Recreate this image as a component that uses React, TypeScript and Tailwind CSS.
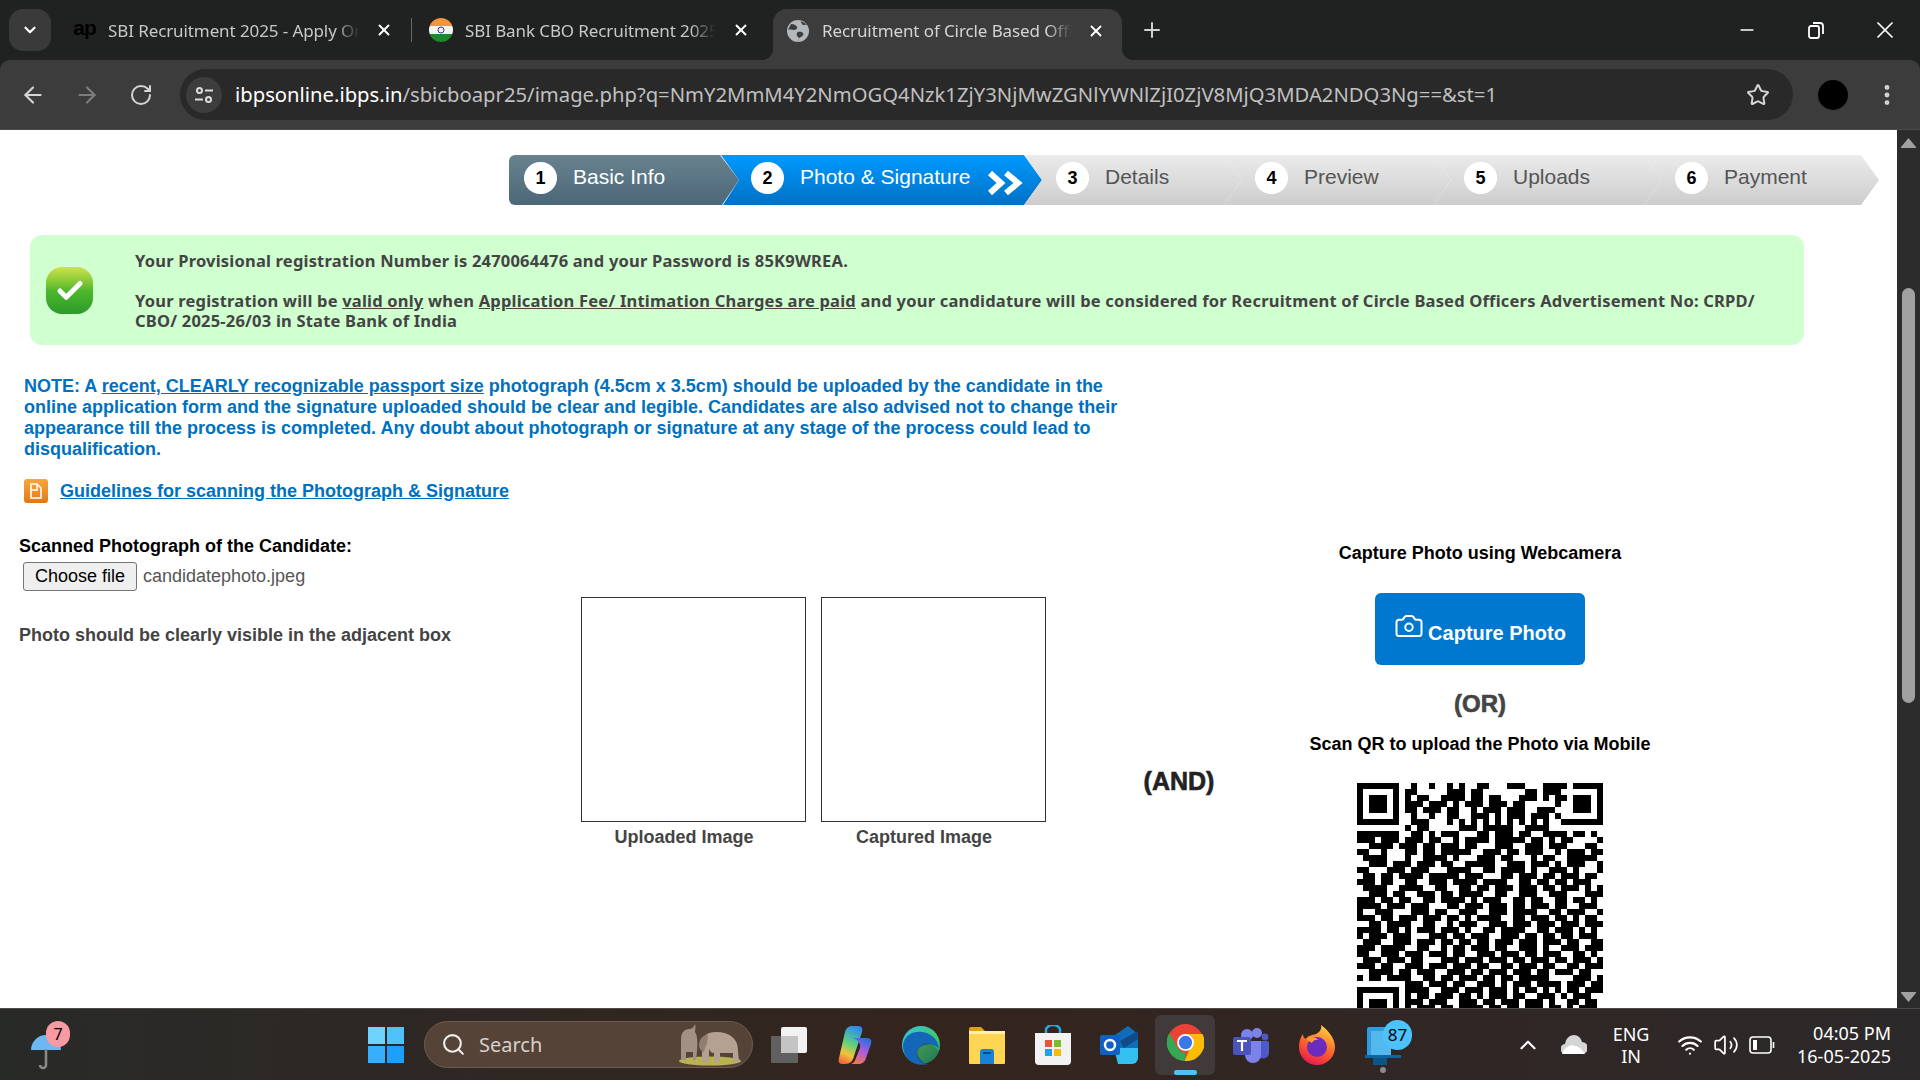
import { ArrowLeft, ArrowRight, Camera, ChevronDown, ChevronUp, Minus, Plus, RotateCw, Search, Star, X, Check, EllipsisVertical, Wifi, Volume2 } from 'lucide-react';

const QR_ROWS = [
  '.........#..#..#.#..##...###...###.#.....',
  '........##.....###.##.......##.####......',
  '........#.##..####.##.##...###.#.#.......',
  '........###.###.#.###.###.##.....##......',
  '........##.###.##..#.###.###..###.#......',
  '.........#..#..##..###.#.###.###.##......',
  '.........###...#.#.#.#.#.#.#.#.#.........',
  '........#.##.....###.#####..####.........',
  '#######..##.#.###...##.###.##..####.##.#.',
  '###.###.###.##..#.####.#####.##.#.##....#',
  '..####.###.##.###.##...###..###.###...##.',
  '##..#...##.##.#####..###.##.###..#.###.##',
  '.####...#..####.#...###.##...#.##..#####.',
  '..###.###.###.##..#####..###.###.#.###..#',
  '##...###.###...####..##.####.#..###.#...#',
  '.##.##.####.#####.###...##.###.##.###.##.',
  '###.##..##..###.####.####..##.##.##.###..',
  '.####..####..##..##.##.###.###.##.###.#.#',
  '..###.##..###.##.####..##..###..###...###',
  '###.##.##..##.####.#.###..##.##..##.##.#.',
  '####.###.###...##.###.###.##.###.##..###.',
  '#..###...###.##..###..###.####..##.###..#',
  '###.##.###.###.##.#.####..##.###.##.#.##.',
  '..##.####..##..#.###..###.###.###.###.###',
  '####.##.#.###.###.#..##.####..##.###.#.#.',
  '#.###.###...###.##.###..###.##.##.##.###.',
  '.###..###.###.##.##.##.###.###.###.##..##',
  '###.####..##..#.##.###.##..###.#..###.###',
  '##..###.###.###.##..###.###.##.###..##.#.',
  '.###.###.##...###.###.###.##.###.##.###.#',
  '###.##..###.###.###.##..##.###.##..##.###',
  '..####.##.###..###.##.###.###.##.###.##..',
  '#.##.####..##.##.###.##.##.#####....###.#',
  '........###.###.##..###.#.###.####.###.##',
  '........####..###.###.###.#.##.#.#.##.###',
  '........#.##.###.##.#.###.##..###.#.###..',
  '........###.###..###.##.###.###.#..##.##.',
  '........#.###.##.####.##.##.###.##.#.###.',
  '........###..###.##.##.###..#.###.##.##.#',
  '........#.##.#.###.###.##.###..##.#.###.#',
  '........##.###.##.#.###.#.##.###.##.#.##.',
];

function qrPath() {
  let d = '';
  QR_ROWS.forEach((row, y) => {
    [...row].forEach((c, x) => {
      if (c === '#') d += `M${x} ${y}h1v1h-1z`;
    });
  });
  const finder = (x: number, y: number) =>
    `M${x} ${y}h7v7h-7zM${x + 1} ${y + 1}v5h5v-5zM${x + 2} ${y + 2}h3v3h-3z`;
  return d + finder(0, 0) + finder(34, 0) + finder(0, 34);
}

const STEPS = [
  { n: 1, label: 'Basic Info', w: 'w-[230px]', pl: 'pl-[15px]', shape: 'first' },
  { n: 2, label: 'Photo & Signature', w: 'w-[321px]', pl: 'pl-[30px]', shape: 'active' },
  { n: 3, label: 'Details', w: 'w-[218px]', pl: 'pl-[32px]', shape: '' },
  { n: 4, label: 'Preview', w: 'w-[227px]', pl: 'pl-[31px]', shape: '' },
  { n: 5, label: 'Uploads', w: 'w-[229px]', pl: 'pl-[31px]', shape: '' },
  { n: 6, label: 'Payment', w: 'w-[235px]', pl: 'pl-[31px]', shape: '' },
];

function Stepper() {
  return (
    <div className="flex ml-[509px] h-[50px] font-['Liberation_Sans',sans-serif]">
      {STEPS.map(s => (
        <div
          key={s.n}
          className={`${s.w} ${s.pl} shrink-0 h-full flex items-center pb-[4px] ${s.n > 1 ? '-ml-[18px]' : 'rounded-l-md'} ${
            s.shape === 'first'
              ? 'bg-gradient-to-b from-[#68828f] to-[#4c6777] text-white [clip-path:polygon(0_0,211px_0,100%_50%,213px_100%,0_100%)]'
              : s.shape === 'active'
                ? 'bg-gradient-to-b from-[#0099ff] to-[#0071c5] text-white [clip-path:polygon(0_0,calc(100%-18px)_0,100%_50%,calc(100%-18px)_100%,2px_100%,18px_50%)]'
                : 'bg-gradient-to-b from-[#ebebeb] to-[#cdcdcd] text-[#555] [clip-path:polygon(0_0,calc(100%-18px)_0,100%_50%,calc(100%-18px)_100%,0_100%,18px_50%)]'
          }`}
        >
          <span className="w-[33px] h-[32px] rounded-full bg-white text-black font-bold text-[18px] flex items-center justify-center shrink-0">{s.n}</span>
          <span className="ml-[16px] mb-[2px] text-[21px] whitespace-nowrap">{s.label}</span>
          {s.shape === 'active' && (
            <svg className="ml-[17px] mt-[10px] shrink-0" width="36" height="24" viewBox="0 0 36 24" fill="none" stroke="white" strokeWidth="6">
              <path d="M3 2l11 10-11 10M19 2l12 10-12 10" />
            </svg>
          )}
        </div>
      ))}
    </div>
  );
}

function SuccessBox() {
  return (
    <div className="ml-[30px] mt-[30px] w-[1774px] h-[110px] rounded-xl bg-[#d0ffd0] flex text-[#444] font-bold font-['Noto_Sans',sans-serif] text-[16.5px] tracking-[0.2px] leading-[20px]">
      <div className="ml-[16px] mt-[32px] w-[47px] h-[47px] rounded-[16px] bg-gradient-to-b from-[#cfe24a] via-[#4eb82c] to-[#2a9a2a] flex items-center justify-center shrink-0">
        <Check className="w-[30px] h-[30px] text-white" strokeWidth={4} />
      </div>
      <div className="ml-[42px] pt-[16px] w-[1635px]">
        <p>Your Provisional registration Number is 2470064476 and your Password is 85K9WREA.</p>
        <p className="mt-[20px]">
          Your registration will be <u>valid only</u> when <u>Application Fee/ Intimation Charges are paid</u> and your candidature will be considered for Recruitment of Circle Based Officers Advertisement No: CRPD/ CBO/ 2025-26/03 in State Bank of India
        </p>
      </div>
    </div>
  );
}

function NoteBlock() {
  return (
    <div className="ml-[24px] mt-[31px] w-[1100px] text-[#0070c0] font-bold font-['Liberation_Sans',sans-serif] text-[18px] leading-[21px]">
      <p>
        NOTE: A <u>recent, CLEARLY recognizable passport size</u> photograph (4.5cm x 3.5cm) should be uploaded by the candidate in the online application form and the signature uploaded should be clear and legible. Candidates are also advised not to change their appearance till the process is completed. Any doubt about photograph or signature at any stage of the process could lead to disqualification.
      </p>
      <div className="flex items-center mt-[19px] h-[24px]">
        <div className="w-[24px] h-[24px] rounded-[3px] bg-gradient-to-b from-[#f9a63b] to-[#e4780f] flex items-center justify-center shrink-0">
          <svg width="14" height="16" viewBox="0 0 14 16" fill="none" stroke="white" strokeWidth="1.6"><path d="M2 1h6l4 4v10H2zM2 7h6V1" /></svg>
        </div>
        <a className="ml-[12px] underline whitespace-nowrap">Guidelines for scanning the Photograph &amp; Signature</a>
      </div>
    </div>
  );
}

function PhotoSection() {
  return (
    <div className="mt-[33px] flex items-start font-['Liberation_Sans',sans-serif] text-[18px]">
      <div className="ml-[19px] w-[562px] shrink-0">
        <p className="font-bold text-black leading-[20px]">Scanned Photograph of the Candidate:</p>
        <div className="mt-[6px] ml-[4px] flex items-center">
          <button className="w-[114px] h-[29px] bg-[#efefef] border border-[#767676] rounded-[3px] text-black">Choose file</button>
          <span className="ml-[6px] text-[#555]">candidatephoto.jpeg</span>
        </div>
        <p className="mt-[34px] font-bold text-[#444] leading-[20px]">Photo should be clearly visible in the adjacent box</p>
      </div>
      <div className="mt-[61px] flex gap-[15px] shrink-0">
        <div className="w-[225px]">
          <div className="h-[225px] border border-[#333]" />
          <p className="mt-[5px] pr-[19px] text-center font-bold text-[#444] leading-[20px]">Uploaded Image</p>
        </div>
        <div className="w-[225px]">
          <div className="h-[225px] border border-[#333]" />
          <p className="mt-[5px] pr-[19px] text-center font-bold text-[#444] leading-[20px]">Captured Image</p>
        </div>
      </div>
      <div className="w-[234px] mt-[230px] pl-[32px] text-center shrink-0 font-bold text-[25px] leading-[30px] text-[#222] [-webkit-text-stroke:0.6px_#222]">(AND)</div>
      <div className="w-[400px] shrink-0 flex flex-col items-center font-bold">
        <p className="mt-[7px] leading-[20px] text-black">Capture Photo using Webcamera</p>
        <button className="mt-[30px] w-[210px] h-[72px] rounded-[6px] bg-[#0078d0] text-white text-[20px] flex items-center justify-center">
          <Camera className="w-[30px] h-[30px] mb-[6px]" strokeWidth={1.6} />
          <span className="ml-[4px] mt-[8px]">Capture Photo</span>
        </button>
        <p className="mt-[24px] text-[24px] leading-[30px] text-[#444] [-webkit-text-stroke:0.6px_#444]">(OR)</p>
        <p className="mt-[15px] leading-[20px] text-black">Scan QR to upload the Photo via Mobile</p>
        <svg className="mt-[29px] shrink-0" width="246" height="246" viewBox="0 0 41 41" shapeRendering="crispEdges">
          <path d={qrPath()} fill="black" fillRule="evenodd" />
        </svg>
      </div>
    </div>
  );
}

function Scrollbar() {
  return (
    <div className="w-[23px] shrink-0 bg-[#2c2c2c] flex flex-col items-center">
      <svg className="mt-[8px]" width="15" height="10" viewBox="0 0 15 10" fill="#a0a0a0"><path d="M7.5 0l7.5 9v1H0V9z" /></svg>
      <div className="mt-[140px] w-[13px] h-[415px] rounded-full bg-[#a0a0a0]" />
      <div className="flex-1" />
      <svg className="mb-[6px]" width="15" height="10" viewBox="0 0 15 10" fill="#a0a0a0"><path d="M7.5 10L0 1V0h15v1z" /></svg>
    </div>
  );
}

function Favicon({ kind }: { kind: 'ap' | 'flag' | 'globe' }) {
  if (kind === 'ap') return <span className="w-[25px] text-center text-[21px] leading-none font-bold text-black tracking-[-1px] font-['Liberation_Sans',sans-serif] mb-[6px]">ap</span>;
  if (kind === 'flag')
    return (
      <svg width="24" height="24" viewBox="0 0 24 24" className="shrink-0">
        <clipPath id="flagc"><circle cx="12" cy="12" r="12" /></clipPath>
        <g clipPath="url(#flagc)">
          <rect width="24" height="8" fill="#f4953a" />
          <rect y="8" width="24" height="8" fill="#f4f4f4" />
          <rect y="16" width="24" height="8" fill="#1a8a2d" />
          <circle cx="12" cy="12" r="3" fill="none" stroke="#33339a" strokeWidth="1" />
        </g>
      </svg>
    );
  return (
    <svg width="24" height="24" viewBox="0 0 24 24" className="shrink-0">
      <circle cx="12" cy="12" r="11" fill="#b4b8bb" />
      <path d="M5 5c3 0 5 1 6 3s-2 3-3 3-4-1-6 0M12 23c0-3 1-4 3-5s3-3 2-4-5-2-6 0 0 3 2 5M15 2c0 2 1 4 3 4s3-1 4 0" fill="#3c3c3c" />
    </svg>
  );
}

function TabStrip() {
  return (
    <div className="h-[60px] bg-[#202222] flex shrink-0 font-['Noto_Sans',sans-serif] text-[17px] tracking-[-0.1px] relative">
      <div className="ml-[9px] mt-[9px] w-[42px] h-[42px] rounded-[14px] bg-[#3a3a3a] flex items-center justify-center text-white">
        <ChevronDown className="w-[18px] h-[18px]" strokeWidth={3} />
      </div>
      <div className="ml-[21px] mt-[9px] h-[42px] flex items-center text-[#c8c8c8]">
        <Favicon kind="ap" />
        <span className="ml-[11px] w-[252px] pt-[2px] whitespace-nowrap overflow-hidden [mask-image:linear-gradient(to_right,black_90%,transparent)]">SBI Recruitment 2025 - Apply Online</span>
        <X className="ml-[15px] w-[18px] h-[18px] text-white" strokeWidth={2.5} />
      </div>
      <div className="ml-[18px] mt-[18px] w-px h-[24px] bg-[#666]" />
      <div className="ml-[17px] mt-[9px] h-[42px] flex items-center text-[#c8c8c8]">
        <Favicon kind="flag" />
        <span className="ml-[12px] w-[250px] pt-[2px] whitespace-nowrap overflow-hidden [mask-image:linear-gradient(to_right,black_90%,transparent)]">SBI Bank CBO Recruitment 2025 Notification</span>
        <X className="ml-[17px] w-[18px] h-[18px] text-white" strokeWidth={2.5} />
      </div>
      <div className="ml-[23px] mt-[9px] w-[349px] h-[51px] rounded-t-[14px] bg-[#3c3c3c] flex items-center pb-[8px] text-[#d4d4d4] relative">
        <span className="ml-[13px]"><Favicon kind="globe" /></span>
        <span className="ml-[12px] w-[250px] whitespace-nowrap overflow-hidden [mask-image:linear-gradient(to_right,black_90%,transparent)]">Recruitment of Circle Based Officers 2025</span>
        <X className="ml-[15px] w-[18px] h-[18px] text-white" strokeWidth={2.5} />
        <span className="absolute -left-[12px] bottom-0 w-[12px] h-[12px] bg-[radial-gradient(circle_at_0_0,#202222_12px,#3c3c3c_12.5px)]" />
        <span className="absolute -right-[12px] bottom-0 w-[12px] h-[12px] bg-[radial-gradient(circle_at_100%_0,#202222_12px,#3c3c3c_12.5px)]" />
      </div>
      <Plus className="ml-[18px] mt-[18px] w-[24px] h-[24px] text-[#cfcfcf]" strokeWidth={2} />
      <div className="flex-1" />
      <Minus className="mt-[20px] w-[20px] h-[20px] text-white" strokeWidth={2} />
      <svg className="ml-[50px] mt-[21px]" width="18" height="18" viewBox="0 0 18 18" fill="none" stroke="white" strokeWidth="1.8">
        <rect x="2" y="5" width="10" height="12" rx="2" /><path d="M6 2h7a3 3 0 0 1 3 3v8" />
      </svg>
      <X className="ml-[46px] mr-[21px] mt-[16px] w-[28px] h-[28px] text-white" strokeWidth={1.5} />
    </div>
  );
}

function Toolbar() {
  return (
    <div className="h-[70px] bg-[#3c3c3c] border-b border-[#4c4c4c] flex items-center shrink-0 rounded-t-[10px] text-[#d5d5d5]">
      <ArrowLeft className="ml-[20px] w-[26px] h-[26px]" strokeWidth={2} />
      <ArrowRight className="ml-[28px] w-[26px] h-[26px] text-[#7d7d7d]" strokeWidth={2} />
      <RotateCw className="ml-[29px] w-[24px] h-[24px]" strokeWidth={2} />
      <div className="ml-[27px] w-[1613px] h-[51px] rounded-full bg-[#292929] flex items-center">
        <div className="ml-[6px] w-[36px] h-[36px] rounded-full bg-[#3d3d3d] flex items-center justify-center">
          <svg width="20" height="20" viewBox="0 0 20 20" fill="none" stroke="#dcdcdc" strokeWidth="2">
            <circle cx="5.5" cy="5.5" r="2.5" /><path d="M11 5.5h8M1 14.5h8" /><circle cx="14.5" cy="14.5" r="2.5" />
          </svg>
        </div>
        <span className="ml-[13px] font-['Noto_Sans',sans-serif] text-[20.25px] whitespace-nowrap text-[#c0c0c0]">
          <span className="text-white">ibpsonline.ibps.in</span>/sbicboapr25/image.php?q=NmY2MmM4Y2NmOGQ4Nzk1ZjY3NjMwZGNlYWNlZjI0ZjV8MjQ3MDA2NDQ3Ng==&amp;st=1
        </span>
        <div className="flex-1" />
        <Star className="mr-[23px] w-[24px] h-[24px]" strokeWidth={2} />
      </div>
      <div className="ml-[25px] w-[30px] h-[30px] rounded-full bg-black" />
      <EllipsisVertical className="ml-[26px] w-[26px] h-[26px]" strokeWidth={2.5} />
    </div>
  );
}

const Slot = ({ children, active }: { children: React.ReactNode; active?: boolean }) => (
  <div className="w-[66px] h-[60px] flex items-center justify-center shrink-0 relative">
    {active && <span className="absolute left-[3px] top-0 w-[60px] h-[60px] rounded-md bg-[#403a3a]" />}
    <span className="relative flex">{children}</span>
  </div>
);

function TaskbarIcons() {
  return (
    <>
      <Slot>
        <svg width="36" height="36" viewBox="0 0 36 36">
          <rect x="0" y="9" width="27" height="27" fill="#606060" rx="1" />
          <rect x="10" y="0" width="26" height="26" fill="#f2f2f2" rx="2" />
          <rect x="10" y="9" width="17" height="17" fill="#c4c4c4" />
        </svg>
      </Slot>
      <Slot>
        <svg width="34" height="38" viewBox="0 0 34 38">
          <defs>
            <linearGradient id="cp" x1="0.6" y1="0" x2="0.3" y2="1">
              <stop offset="0" stopColor="#2f8cf0" /><stop offset=".45" stopColor="#5bd17e" /><stop offset=".75" stopColor="#f2c33c" /><stop offset="1" stopColor="#f06a3c" />
            </linearGradient>
            <linearGradient id="cp2" x1="0.7" y1="0" x2="0.3" y2="1">
              <stop offset="0" stopColor="#2b6de0" /><stop offset=".5" stopColor="#b25be0" /><stop offset="1" stopColor="#f0784a" />
            </linearGradient>
          </defs>
          <path d="M7 6c1-4 4-6 7-6h6c4 0 5 3 4 6l-8 24c-1 5-4 8-9 8H4c-3 0-4-3-3-6z" fill="url(#cp)" />
          <path d="M15 12h14c4 0 5 3 4 6l-5 14c-1 4-4 6-8 6h-7c3-1 4-3 5-6l4-10c1-3-1-8-7-10z" fill="url(#cp2)" />
        </svg>
      </Slot>
      <Slot>
        <svg width="38" height="40" viewBox="0 0 38 40">
          <defs>
            <linearGradient id="edge" x1="0" y1="0" x2="1" y2="1">
              <stop offset="0" stopColor="#36c3e0" /><stop offset=".6" stopColor="#3fc86a" /><stop offset="1" stopColor="#1d9d7c" />
            </linearGradient>
          </defs>
          <circle cx="19" cy="20" r="19" fill="url(#edge)" />
          <path d="M1 20C3 9 12 6 20 7c8 1 16 6 17 17-3-4-9-6-15-4-7 2-9 9-4 14 2 3 6 5 9 5-11 3-26-2-26-19z" fill="#1467b8" />
          <path d="M16 24c2-5 9-7 15-4 3 2 6 6 6 6-1 7-6 11-11 13-8 0-14-8-10-15z" fill="#2a2522" opacity=".35" />
        </svg>
      </Slot>
      <Slot>
        <svg width="36" height="38" viewBox="0 0 36 38">
          <path d="M0 3a2 2 0 0 1 2-2h10l4 4H0z" fill="#dfa016" />
          <rect y="5" width="36" height="33" fill="#fcd652" rx="1" />
          <rect x="0" y="5" width="36" height="3" fill="#fff1a8" />
          <path d="M11 26a3 3 0 0 1 3-3h8a3 3 0 0 1 3 3v12H11z" fill="#1882d8" />
          <rect x="14" y="26" width="8" height="2" fill="#0d4a80" />
        </svg>
      </Slot>
      <Slot>
        <svg width="36" height="40" viewBox="0 0 36 40">
          <path d="M11 8V5a7 5 0 0 1 14 0v3" fill="none" stroke="#27a7e0" strokeWidth="2.5" />
          <path d="M0 8h36v28a4 4 0 0 1-4 4H4a4 4 0 0 1-4-4z" fill="#f2f2f2" />
          <rect x="10" y="15" width="7" height="7" fill="#e9533a" /><rect x="19" y="15" width="7" height="7" fill="#7dbb2d" />
          <rect x="10" y="24" width="7" height="7" fill="#21a0e8" /><rect x="19" y="24" width="7" height="7" fill="#f9b912" />
        </svg>
      </Slot>
      <Slot>
        <svg width="38" height="38" viewBox="0 0 38 38">
          <path d="M12 11L28 0l10 8v16l-26-1z" fill="#0f6db8" />
          <path d="M14 22h24v10a6 6 0 0 1-6 6H18z" fill="#34c0ee" />
          <path d="M20 15L38 5v8L24 22z" fill="#124a86" />
          <rect x="0" y="9" width="20" height="20" rx="2" fill="#0f62c2" />
          <circle cx="10" cy="19" r="5" fill="none" stroke="white" strokeWidth="2.4" />
        </svg>
      </Slot>
      <Slot active>
        <svg width="37" height="37" viewBox="0 0 48 48" className="mb-[4px]">
          <circle cx="24" cy="24" r="24" fill="#e94335" />
          <path d="M24 48A24 24 0 0 1 3 12l11 19c3 5 7 6 10 6z" fill="#34a853" />
          <path d="M46 13H24c5 0 9 3 10 7l-11 28A24 24 0 0 0 46 13z" fill="#fbbc05" />
          <circle cx="24" cy="24" r="11" fill="white" />
          <circle cx="24" cy="24" r="8.6" fill="#3b78e7" />
        </svg>
        <span className="absolute -bottom-[10px] left-[7px] w-[23px] h-[5px] rounded-full bg-[#4cc2ff]" />
      </Slot>
      <Slot>
        <svg width="36" height="36" viewBox="0 0 36 36">
          <circle cx="24" cy="6" r="5" fill="#7b83eb" />
          <circle cx="32" cy="10" r="3.4" fill="#5059c9" />
          <path d="M26 14h8a2 2 0 0 1 2 2v10a6 6 0 0 1-10 4z" fill="#5059c9" />
          <path d="M12 14h16v14a8 8 0 0 1-16 0z" fill="#7b83eb" />
          <circle cx="14" cy="8" r="6" fill="#7b83eb" />
          <rect x="0" y="10" width="18" height="18" rx="2" fill="#4b53bc" />
          <path d="M4 14h10M9 14v10" stroke="white" strokeWidth="2.2" />
        </svg>
      </Slot>
      <Slot>
        <svg width="36" height="40" viewBox="0 0 36 40">
          <defs>
            <linearGradient id="ff" x1="0.7" y1="0" x2="0.3" y2="1">
              <stop offset="0" stopColor="#ffd53e" /><stop offset=".5" stopColor="#ff6a2c" /><stop offset="1" stopColor="#e8184d" />
            </linearGradient>
          </defs>
          <path d="M22 0c8 6 14 14 14 22a18 18 0 0 1-36 0c0-5 1-9 4-13 0 3 1 4 3 5 1-3 6-4 10-5 4-2 6-5 5-9z" fill="url(#ff)" />
          <circle cx="18" cy="22" r="10" fill="#6a2bbf" />
          <path d="M7 14c4-3 10-2 13 1-4-1-6 1-7 3z" fill="#ff9a2c" />
        </svg>
      </Slot>
      <Slot>
        <svg width="36" height="40" viewBox="0 0 36 40">
          <rect x="2" y="2" width="22" height="30" rx="2" fill="#2f9ce0" />
          <rect x="6" y="6" width="20" height="24" fill="#52b8ee" />
          <rect x="0" y="30" width="36" height="3" fill="#12649e" />
          <rect x="8" y="33" width="14" height="7" fill="#0d5488" />
        </svg>
        <span className="absolute left-[18px] -top-[5px] w-[29px] h-[30px] rounded-full bg-[#4cc2ff] text-black text-[17px] flex items-center justify-center font-['Noto_Sans',sans-serif]">87</span>
        <span className="absolute -bottom-[8px] left-[15px] w-[6px] h-[6px] rounded-full bg-[#8a8a8a]" />
      </Slot>
    </>
  );
}

function Taskbar() {
  return (
    <div className="h-[72px] shrink-0 border-t border-[#4e4a48] bg-gradient-to-r from-[#282a28] via-[#34241e] to-[#2c292a] flex items-center font-['Noto_Sans',sans-serif] text-white">
      <div className="ml-[30px] w-[40px] h-[50px] relative shrink-0">
        <svg className="absolute left-0 top-[14px]" width="32" height="36" viewBox="0 0 32 36">
          <path d="M1 16a15 15 0 0 1 30 0z" fill="#6db8f2" />
          <path d="M16 15v16a3 3 0 0 1-6 0" fill="none" stroke="#8a8a8a" strokeWidth="2.5" />
        </svg>
        <span className="absolute left-[16px] top-[1px] w-[24px] h-[26px] rounded-full bg-[#f89aa4] text-black text-[16px] flex items-center justify-center">7</span>
      </div>
      <div className="ml-[298px] w-[36px] h-[36px] grid grid-cols-2 gap-[2px] shrink-0">
        <div className="bg-[#6fd3ff]" /><div className="bg-[#4fc1ff]" /><div className="bg-[#35b0ff]" /><div className="bg-[#1ca0ff]" />
      </div>
      <div className="ml-[20px] w-[329px] h-[47px] rounded-full bg-[#564338] border border-[#6e5c52] flex items-center shrink-0 text-[#d8d0cb]">
        <Search className="ml-[16px] w-[25px] h-[25px] text-[#eee]" strokeWidth={2} />
        <span className="ml-[13px] text-[20px]">Search</span>
        <div className="flex-1" />
        <svg className="mr-[10px]" width="64" height="42" viewBox="0 0 64 42">
          <ellipse cx="32" cy="37" rx="31" ry="4.5" fill="#b9b24f" />
          <path d="M3 36V16C3 9 6 5 11 5c3 0 5-2 6-5 1 3 0 6 0 8 3 4 3 14 1 28h-3v-8H8v8z" fill="#a29085" />
          <path d="M24 38V20c0-8 5-12 14-12 14 0 22 7 22 18 0 4 1 8 1 12h-6v-9H42v9h-6v-9c-3 0-4-2-5-4v13z" fill="#b5a192" />
          <path d="M30 11c-5 0-9 4-9 10 0 4 2 6 5 7 1-3 1-6 3-8z" fill="#8f7e72" />
        </svg>
      </div>
      <div className="ml-[3px] flex items-center">
        <TaskbarIcons />
      </div>
      <div className="flex-1" />
      <ChevronUp className="w-[26px] h-[26px] shrink-0" strokeWidth={2} />
      <svg className="ml-[20px] shrink-0" width="26" height="26" viewBox="0 0 26 26">
        <path d="M5 22a5 5 0 0 1-1-10c1-6 5-9 9-9s7 3 8 7a6 6 0 0 1 0 12z" fill="#d5d5d5" />
        <path d="M1 22c3-8 10-10 13-8 3 0 7 3 10 8z" fill="white" />
      </svg>
      <div className="ml-[11px] w-[66px] text-center text-[18px] leading-[22px] shrink-0">
        <p>ENG</p>
        <p>IN</p>
      </div>
      <Wifi className="ml-[13px] w-[26px] h-[26px] shrink-0" strokeWidth={2} />
      <Volume2 className="ml-[10px] w-[26px] h-[26px] shrink-0" strokeWidth={1.6} />
      <svg className="ml-[10px] shrink-0" width="26" height="18" viewBox="0 0 26 18" fill="none" stroke="white" strokeWidth="1.6">
        <rect x="1" y="1" width="21" height="16" rx="3" /><rect x="4" y="4" width="4" height="10" fill="white" stroke="none" /><path d="M24.5 6v6" />
      </svg>
      <div className="ml-[22px] mr-[29px] text-right text-[18px] leading-[23px] whitespace-nowrap shrink-0">
        <p>04:05 PM</p>
        <p>16-05-2025</p>
      </div>
    </div>
  );
}

export default function App() {
  return (
    <div className="w-screen h-screen flex flex-col overflow-hidden bg-[#202222]">
      <TabStrip />
      <Toolbar />
      <div className="flex-1 min-h-0 flex bg-white">
        <main className="flex-1 min-w-0 overflow-hidden pt-[25px]">
          <Stepper />
          <SuccessBox />
          <NoteBlock />
          <PhotoSection />
        </main>
        <Scrollbar />
      </div>
      <Taskbar />
    </div>
  );
}
